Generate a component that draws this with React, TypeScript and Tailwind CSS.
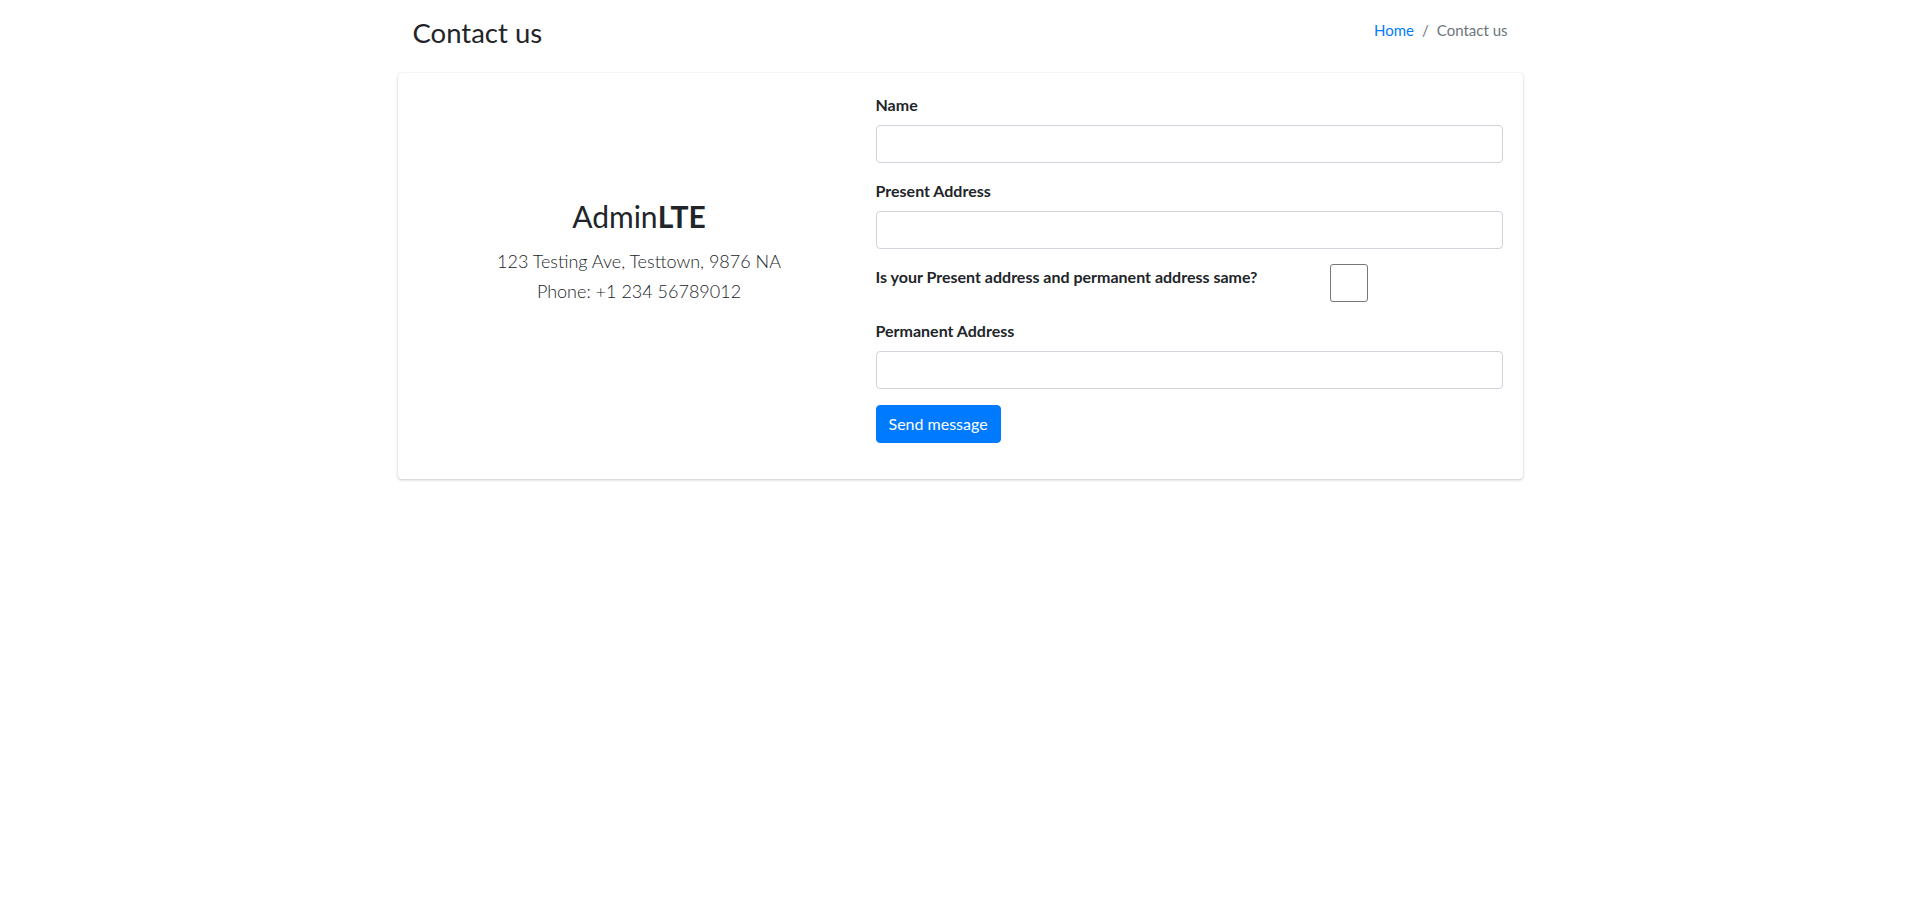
import React from 'react';

const font = { fontFamily: 'Lato, "Liberation Sans", Arial, sans-serif' };

function Field({ label }: { label: string }) {
  return (
    <div className="mb-4">
      <label className="mb-2 block text-[16px] font-bold leading-6">{label}</label>
      <input
        type="text"
        className="block h-[38px] w-full rounded-[4px] border border-[#ced4da] bg-white px-3 text-[16px] outline-none"
      />
    </div>
  );
}

export default function App() {
  return (
    <div className="min-h-screen bg-white text-[#212529]" style={font}>
      <div className="mx-auto w-[1140px] px-[7.5px]">
        <div className="flex h-[64px] items-center justify-between px-[15px]">
          <h1 className="m-0 text-[27.5px] font-normal leading-[1.2]">Contact us</h1>
          <ol className="mb-[5px] flex items-center text-[15px] leading-6">
            <li>
              <a href="#" className="text-[#007bff]">
                Home
              </a>
            </li>
            <li className="px-2 text-[#6c757d]">/</li>
            <li className="text-[#6c757d]">Contact us</li>
          </ol>
        </div>

        <div className="mt-[9px] rounded-[4px] bg-white shadow-[0_0_1px_rgba(0,0,0,0.125),0_1px_3px_rgba(0,0,0,0.2)]">
          <div className="flex gap-[15px] p-5">
            <div className="flex w-[443px] shrink-0 items-center justify-center text-center">
              <div>
                <h2 className="mb-3 text-[30px] font-normal leading-[1.2]">
                  Admin<strong className="font-bold">LTE</strong>
                </h2>
                <p className="mb-12 text-[18px] font-light leading-[30px]">
                  123 Testing Ave, Testtown, 9876 NA
                  <br />
                  Phone: +1 234 56789012
                </p>
              </div>
            </div>

            <form className="flex-1" onSubmit={(e) => e.preventDefault()}>
              <Field label="Name" />
              <Field label="Present Address" />
              <div className="mb-4 flex h-[38px] items-start">
                <label className="w-[454px] shrink-0 text-[16px] font-bold leading-6">
                  Is your Present address and permanent address same?
                </label>
                <input
                  type="checkbox"
                  className="-mt-px h-[38px] w-[38px] appearance-none rounded-[3px] border border-[#767676] bg-white"
                />
              </div>
              <Field label="Permanent Address" />
              <div className="mb-4">
                <button
                  type="submit"
                  className="h-[38px] rounded-[4px] border border-[#007bff] bg-[#007bff] px-3 text-[16px] leading-6 text-white"
                >
                  Send message
                </button>
              </div>
            </form>
          </div>
        </div>
      </div>
    </div>
  );
}
